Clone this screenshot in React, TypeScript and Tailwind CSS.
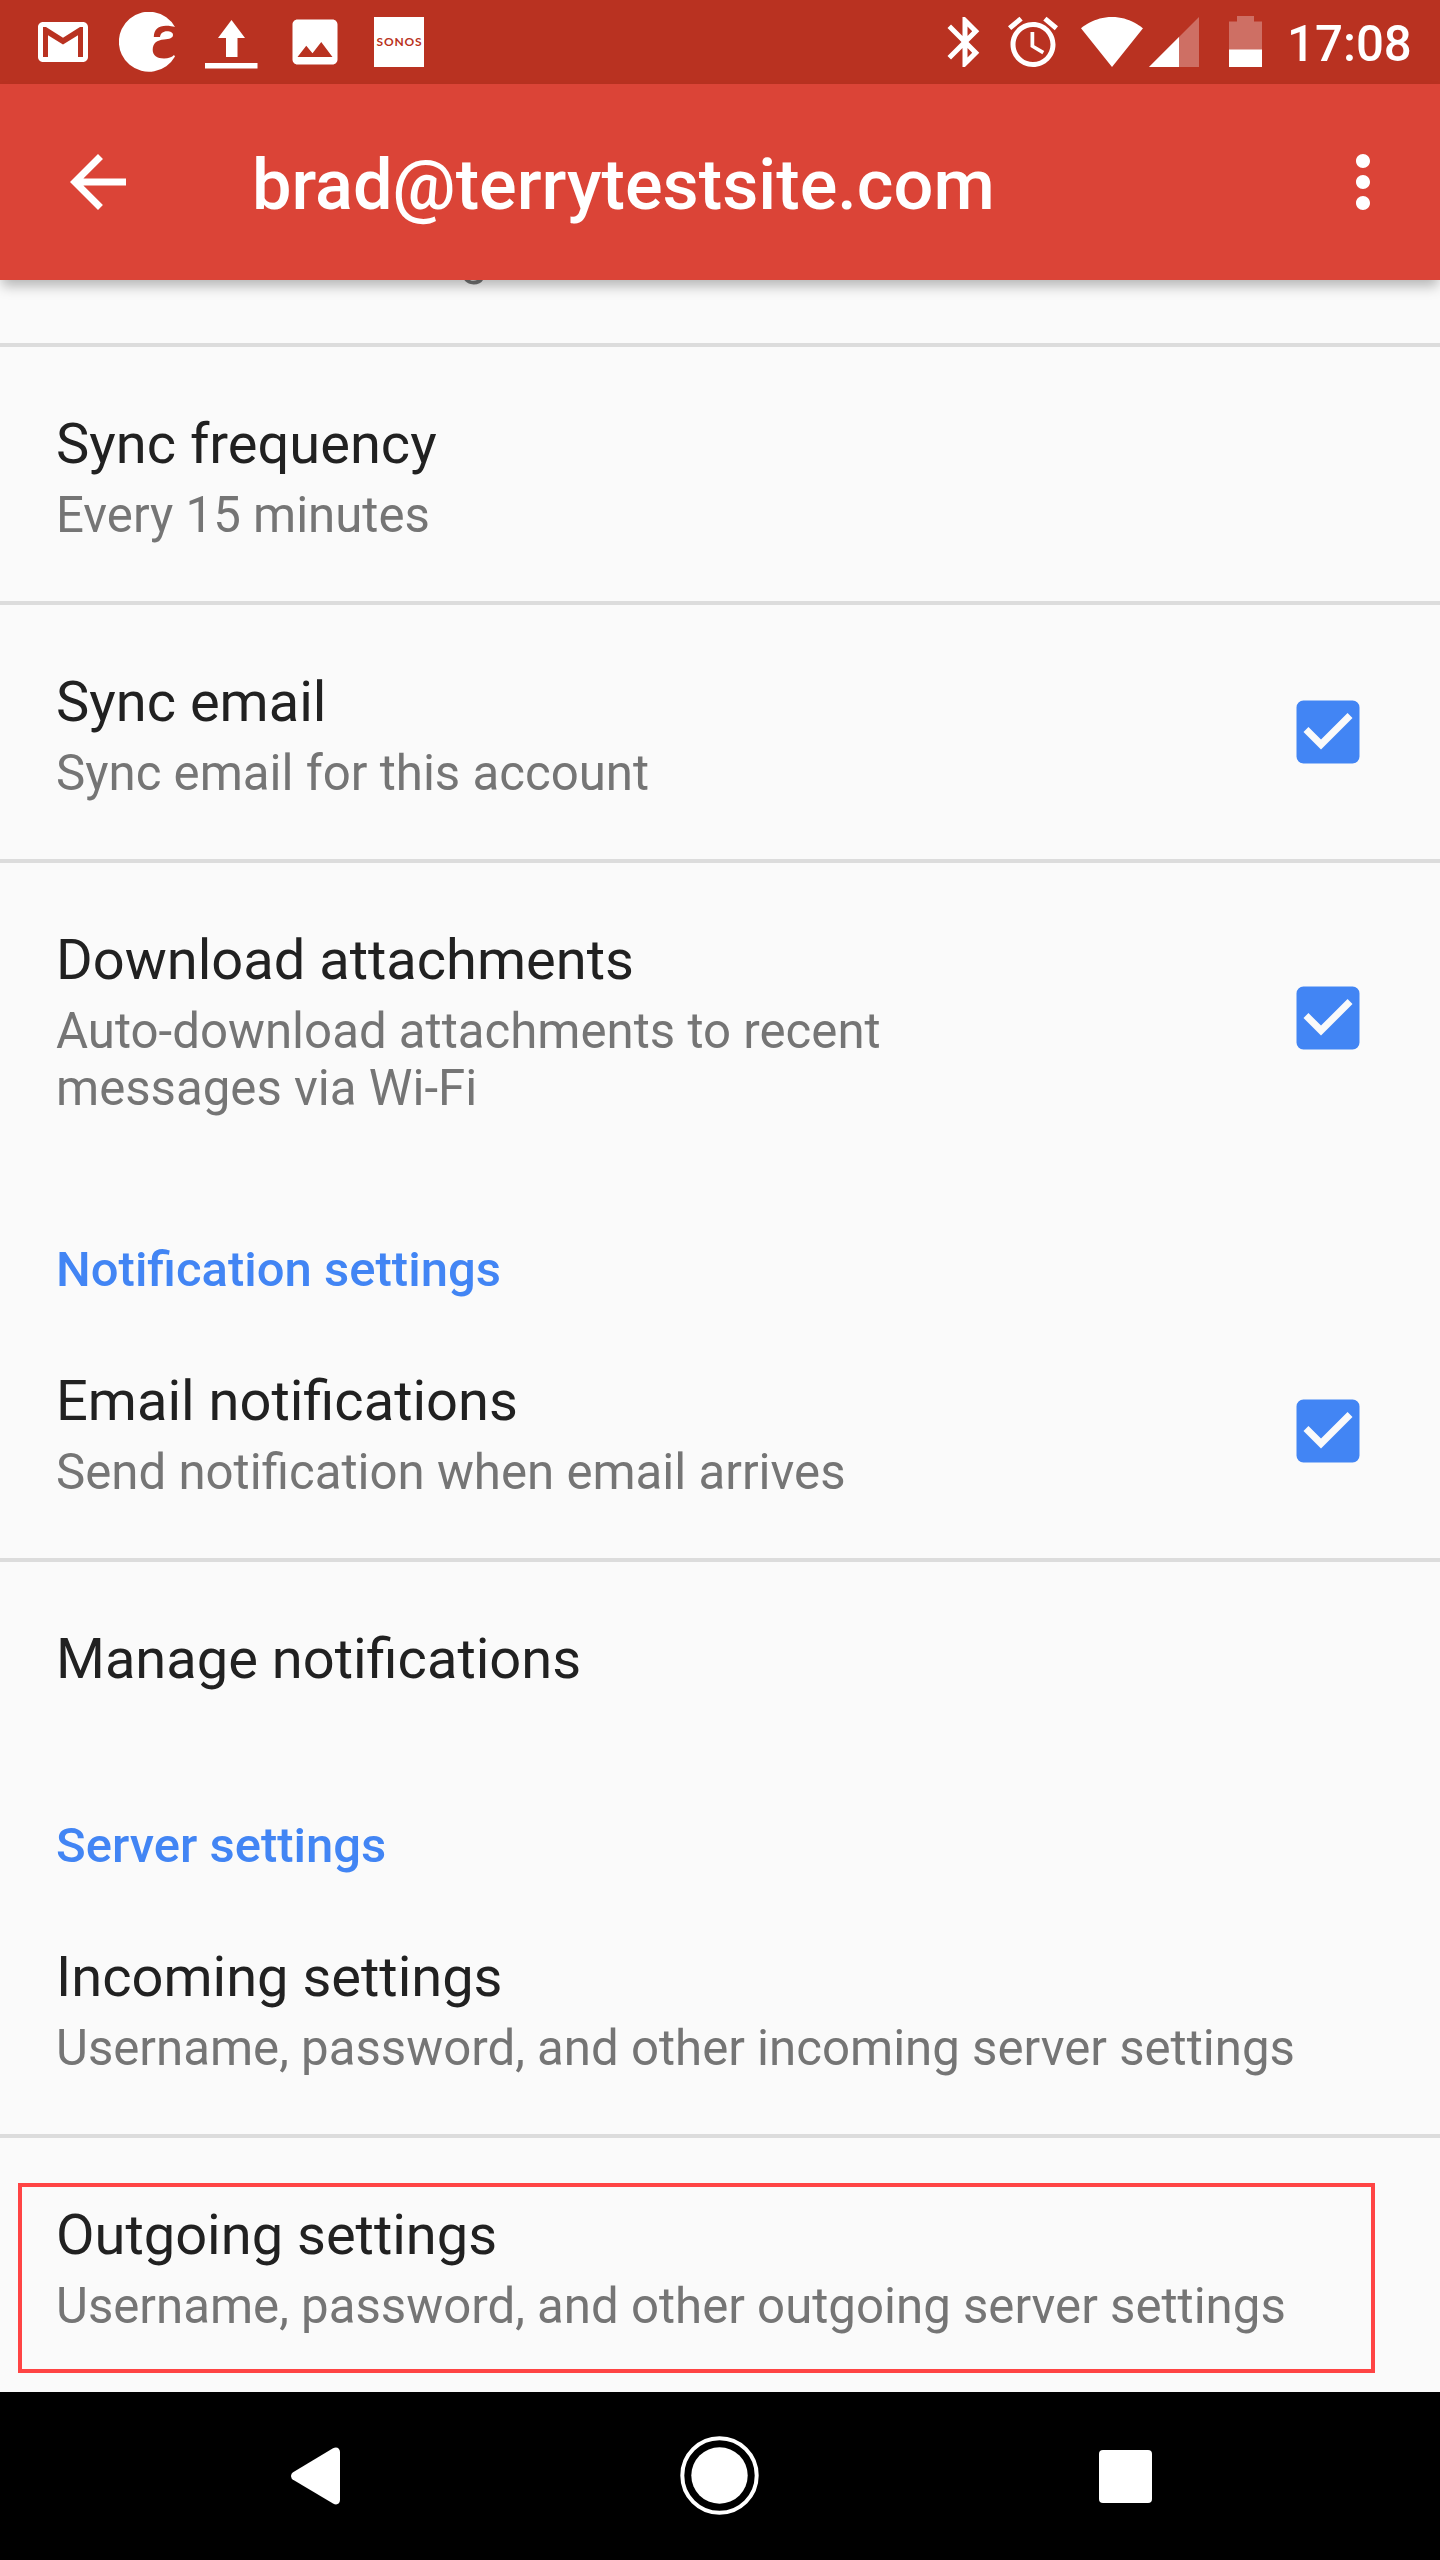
import React from 'react';
import { MdArrowBack, MdCheckBox, MdImage, MdMoreVert } from 'react-icons/md';

const SETTINGS = [
  {
    title: '',
    items: [
      { title: 'Sync frequency', summary: ['Every 15 minutes'] },
      { title: 'Sync email', summary: ['Sync email for this account'], checked: true },
      {
        title: 'Download attachments',
        summary: ['Auto-download attachments to recent', 'messages via Wi-Fi'],
        checked: true,
      },
    ],
  },
  {
    title: 'Notification settings',
    items: [
      { title: 'Email notifications', summary: ['Send notification when email arrives'], checked: true },
      { title: 'Manage notifications', summary: [] },
    ],
  },
  {
    title: 'Server settings',
    items: [
      { title: 'Incoming settings', summary: ['Username, password, and other incoming server settings'] },
      {
        title: 'Outgoing settings',
        summary: ['Username, password, and other outgoing server settings'],
        highlighted: true,
      },
    ],
  },
];

type Item = {
  title: string;
  summary: string[];
  checked?: boolean;
  highlighted?: boolean;
};

const StatusBar = () => (
  <div className="flex h-[84px] items-center bg-[#b93221] text-white">
    {/* LEFT: NOTIFICATIONS */}
    <svg className="ml-[33px] size-[60px]" viewBox="0 0 24 24" fill="currentColor">
      <path d="M20 4H4c-1.1 0-2 .9-2 2v12c0 1.1.9 2 2 2h16c1.1 0 2-.9 2-2V6c0-1.1-.9-2-2-2zm0 14h-2V9.25L12 13 6 9.25V18H4V6h1.2l6.8 4.25L18.8 6H20v12z" />
    </svg>
    <svg className="ml-[26px] size-[60px]" viewBox="0 0 60 60" fill="currentColor">
      <path d="M56 15A30 30 0 1 0 56 44.500L55 43C53 45.300 49.500 46.500 45 46.500C38 46.500 33.700 43 33.700 38C33.700 31 38 28.300 45 27.600C50.500 27 54 26 54 23C54 20.500 51.500 19.300 48 19.300C44 19.300 41.500 21.500 41 25H34.800C35 17 39.500 13.700 47 13.700C51 13.700 53.500 14.300 56 15Z" />
    </svg>
    <svg className="ml-[22px] size-[60px]" viewBox="0 0 60 60" fill="currentColor">
      <path d="M30.500 8 44 26H36.500V45H25V26H17ZM4 51H56.500V56.500H4Z" />
    </svg>
    <MdImage className="ml-[24px] size-[60px]" />
    <div className="ml-[29px] flex size-[50px] items-center justify-center bg-white pl-px font-['Lato'] text-[12px] font-bold tracking-[0.8px] text-[#b93221]">
      SONOS
    </div>

    {/* RIGHT: SYSTEM ICONS */}
    <svg className="ml-[511px] size-[60px]" viewBox="0 0 24 24" fill="currentColor">
      <path d="M17.71 7.71L12 2h-1v7.59L6.41 5 5 6.41 10.59 12 5 17.59 6.41 19 11 14.41V22h1l5.71-5.71-4.3-4.29 4.3-4.29zM13 5.83l1.88 1.88L13 9.59V5.83zm1.88 10.46L13 18.17v-3.76l1.88 1.88z" />
    </svg>
    <svg className="ml-[8px] size-[60px]" viewBox="0 0 24 24" fill="currentColor">
      <path d="M22 5.72l-4.6-3.86-1.29 1.53 4.6 3.86L22 5.72zM7.88 3.39L6.6 1.86 2 5.71l1.29 1.53 4.59-3.85zM12.5 8H11v6l4.75 2.85.75-1.23-4-2.37V8zM12 4c-4.97 0-9 4.03-9 9s4.02 9 9 9c4.97 0 9-4.03 9-9s-4.03-9-9-9zm0 16c-3.87 0-7-3.13-7-7s3.13-7 7-7 7 3.13 7 7-3.13 7-7 7z" />
    </svg>
    <svg className="ml-[18px] h-[50px] w-[62px]" viewBox="0 0 62 50" fill="currentColor">
      <path d="M31 50 62 11.300C60.500 10.200 49 0 31 0S1.500 10.200 0 11.300Z" />
    </svg>
    <svg className="ml-[6px] size-[50px]" viewBox="0 0 50 50" fill="currentColor">
      <path d="M0 50 50 0V50Z" fillOpacity=".3" />
      <path d="M0 50 30 20V50Z" />
    </svg>
    <svg className="ml-[30px] h-[52px] w-[33px]" viewBox="0 0 33 52" fill="currentColor">
      <path d="M0 5.500H8V0H25V5.500H33V51H0Z" fillOpacity=".3" />
      <path d="M0 33.500H33V51H0Z" />
    </svg>
    <span className="ml-[25px] pt-[4px] text-[49.2px] leading-[60px] font-medium">17:08</span>
  </div>
);

const AppBar = () => (
  <div className="relative z-10 flex h-[196px] items-center bg-[#db4437] text-white shadow-[0_8px_12px_-2px_rgba(0,0,0,0.28)]">
    <MdArrowBack className="ml-[56px] size-[84px]" />
    <h1 className="ml-[112px] flex-1 pt-[5px] text-[70.3px] leading-[82px] font-medium">
      brad@terrytestsite.com
    </h1>
    <MdMoreVert className="mr-[35px] size-[84px]" />
  </div>
);

const SettingRow = ({ item }: { item: Item }) => (
  <div className="relative flex items-center justify-between pr-[70px] pl-[56px]">
    <div className="pt-[64px] pb-[57px]">
      <div className="mb-px text-[56px] leading-[66px] text-[#212121]">{item.title}</div>
      {item.summary.length > 0 && (
        <div className="mt-[10px] text-[49.2px] leading-[57px] whitespace-nowrap text-[#757575]">
          {item.summary.map((line) => (
            <div key={line}>{line}</div>
          ))}
        </div>
      )}
    </div>
    {item.checked && (
      <MdCheckBox
        className={`size-[84px] shrink-0 text-[#4285f4] ${item.summary.length > 1 ? 'mb-px' : ''}`}
      />
    )}

    {/* red frame drawn over the row */}
    {item.highlighted && (
      <div className="absolute top-[45px] left-[18px] h-[190px] w-[1357px] border-4 border-[#ff4444]" />
    )}
  </div>
);

const NavBar = () => (
  <div className="flex h-[168px] items-center bg-black pl-[291px] text-white">
    <svg className="h-[58px] w-[50px]" viewBox="0 0 50 58" fill="currentColor">
      <path d="M2.500 25 42 1.200C45.500-.8 49 1 49 5V53C49 57 45.500 58.500 42 56.500L2.500 33C-.8 31 -.8 27 2.500 25Z" />
    </svg>
    <svg className="ml-[339px] size-[80px]" viewBox="0 0 80 80">
      <circle cx="39.5" cy="39.5" r="37.2" fill="none" stroke="currentColor" strokeWidth="4" />
      <circle cx="39.5" cy="39.5" r="28.2" fill="currentColor" />
    </svg>
    <div className="mt-px ml-[339px] size-[53px] rounded-[4px] bg-white" />
  </div>
);

const App = () => {
  return (
    <div className="flex h-[2560px] w-[1440px] flex-col overflow-hidden bg-[#fafafa] font-['Roboto',sans-serif]">
      <StatusBar />
      <AppBar />

      {/* ================= SETTINGS LIST ================= */}
      <div className="flex-1 overflow-hidden">
        {/* row scrolled under the app bar */}
        <div className="flex h-[67px] flex-col justify-end overflow-hidden border-b-4 border-[#dcdcdc] pb-[57px] pl-[56px] text-[49.2px] leading-[57px] text-[#757575]">
          Ask before showing
        </div>

        {SETTINGS.map((section) => (
          <div key={section.title}>
            {section.title && (
              <h2 className="h-[130px] pt-[67px] pl-[56px] text-[49px] leading-[57px] font-medium text-[#4285f4]">
                {section.title}
              </h2>
            )}
            <div className="divide-y-4 divide-[#dcdcdc]">
              {section.items.map((item) => (
                <SettingRow key={item.title} item={item} />
              ))}
            </div>
          </div>
        ))}
      </div>

      <NavBar />
    </div>
  );
};

export default App;
